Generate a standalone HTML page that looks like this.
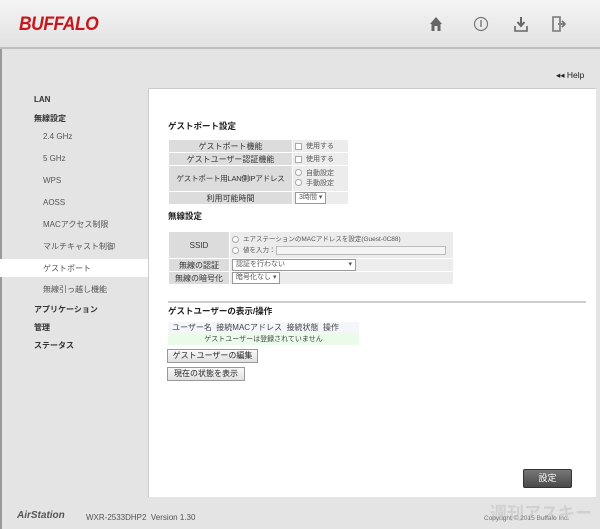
<!DOCTYPE html>
<html><head><meta charset="utf-8"><style>
*{margin:0;padding:0;box-sizing:border-box}
body{width:600px;height:529px;overflow:hidden;background:#e4e4e4;font-family:"Liberation Sans","Noto Sans CJK JP",sans-serif;font-size:9px;color:#333;position:relative}
.abs{position:absolute;white-space:nowrap}
.hdr{left:0;top:0;width:600px;height:49px;background:linear-gradient(#f4f4f4,#e2e2e2);border-bottom:2px solid #bdbdbd}
.logo{left:19px;top:14px;font:italic bold 19px "Liberation Sans",sans-serif;color:#c8161d;letter-spacing:-0.5px;transform:scaleX(0.92);transform-origin:left}
.side div{position:absolute;left:34px;font-size:8px;color:#333;white-space:nowrap}
.side .s{left:43px;color:#555}
.side b{font-weight:bold}
.panel{left:148px;top:88px;width:448px;height:409px;background:#fff;border-left:1px solid #ccc;border-top:1px solid #ccc}
.t{font-size:8.5px;color:#222;font-weight:bold}
table{border-collapse:collapse;position:absolute;font-size:8px;table-layout:fixed}
td{border:1px solid #fff;padding:0 2px;white-space:nowrap;overflow:hidden}
td.l{background:#dcdcdc;text-align:center;color:#333}
td.v{background:#ececec;color:#555;font-size:7px}
.btn{position:absolute;white-space:nowrap;background:linear-gradient(#f8f8f8,#e0e0e0);border:1px solid #999;font-size:8px;color:#222;padding:0 3px;line-height:12px;text-align:center}
.sel{display:inline-block;background:#fff;border:1px solid #999;font-size:7px;padding:0 3px;line-height:10px}
.cb{display:inline-block;width:7px;height:7px;border:1px solid #aaa;background:#fff;vertical-align:middle;margin-right:4px}
.rd{display:inline-block;width:7px;height:7px;border:1px solid #aaa;border-radius:50%;background:#fff;vertical-align:middle;margin-right:4px}
</style></head><body>
<div class="abs" style="left:0;top:0;width:2px;height:529px;background:#999"></div>
<div class="abs hdr"></div>
<div class="abs logo">BUFFALO</div>
<svg class="abs" style="left:428px;top:14px" width="170" height="20" viewBox="0 0 170 20">
<path d="M2 10 L8 3 L14 10 L12.5 10 L12.5 17 L9.5 17 L9.5 12 L6.5 12 L6.5 17 L3.5 17 L3.5 10Z" fill="#666"/>
<circle cx="53" cy="10" r="6.5" fill="none" stroke="#777" stroke-width="1.2"/><rect x="52.3" y="6" width="1.4" height="7" fill="#777"/>
<path d="M93 3v8M89.5 8l3.5 4 3.5-4" stroke="#666" stroke-width="2" fill="none"/><path d="M87 12v5h12v-5" stroke="#666" stroke-width="1.6" fill="none"/>
<path d="M132 9V3h-7v14h7v-6" stroke="#777" stroke-width="1.6" fill="none"/><path d="M130 10h6M134 7l3 3-3 3" stroke="#777" stroke-width="1.8" fill="none"/>
</svg>
<div class="abs" style="left:556px;top:70px;font-size:8.5px;color:#222">◂◂ Help</div>
<div class="abs" style="left:0;top:259px;width:148px;height:18px;background:#fff"></div>
<div class="side">
<div style="top:95px"><b>LAN</b></div>
<div style="top:113px"><b>無線設定</b></div>
<div class="s" style="top:132px">2.4 GHz</div>
<div class="s" style="top:154px">5 GHz</div>
<div class="s" style="top:176px">WPS</div>
<div class="s" style="top:198px">AOSS</div>
<div class="s" style="top:219px">MACアクセス制限</div>
<div class="s" style="top:241px">マルチキャスト制御</div>
<div class="s" style="top:263px">ゲストポート</div>
<div class="s" style="top:284px">無線引っ越し機能</div>
<div style="top:304px"><b>アプリケーション</b></div>
<div style="top:322px"><b>管理</b></div>
<div style="top:340px"><b>ステータス</b></div>
</div>
<div class="abs panel"></div>
<div class="abs t" style="left:168px;top:120px">ゲストポート設定</div>
<table style="left:168px;top:139px;width:181px">
<tr style="height:13px"><td class="l" style="width:124px">ゲストポート機能</td><td class="v"><span class="cb"></span>使用する</td></tr>
<tr style="height:13px"><td class="l">ゲストユーザー認証機能</td><td class="v"><span class="cb"></span>使用する</td></tr>
<tr style="height:26px"><td class="l" style="font-size:7.6px;letter-spacing:-0.3px">ゲストポート用LAN側IPアドレス</td><td class="v" style="line-height:10px"><span class="rd"></span>自動設定<br><span class="rd"></span>手動設定</td></tr>
<tr style="height:13px"><td class="l">利用可能時間</td><td class="v"><span class="sel">3時間 ▾</span></td></tr>
</table>
<div class="abs t" style="left:168px;top:210px">無線設定</div>
<table style="left:168px;top:231px;width:286px">
<tr style="height:27px"><td class="l" style="width:61px">SSID</td><td class="v" style="line-height:11px;font-size:6.5px"><span class="rd"></span>エアステーションのMACアドレスを設定(Guest-0C88)<br><span class="rd"></span>値を入力：<span style="display:inline-block;width:170px;height:9px;border:1px solid #bbb;background:#f4f4f4;vertical-align:middle"></span></td></tr>
<tr style="height:13px"><td class="l">無線の認証</td><td class="v"><span class="sel" style="width:124px">認証を行わない<span style="float:right">▾</span></span></td></tr>
<tr style="height:13px"><td class="l">無線の暗号化</td><td class="v"><span class="sel">暗号化なし ▾</span></td></tr>
</table>
<div class="abs" style="left:168px;top:301px;width:418px;height:2px;background:#ccc"></div>
<div class="abs t" style="left:168px;top:305px">ゲストユーザーの表示/操作</div>
<div class="abs" style="left:168px;top:322px;width:191px;height:12px;background:#f4f6fa;font-size:8px;color:#444;padding-left:4px">ユーザー名&nbsp; 接続MACアドレス&nbsp; 接続状態&nbsp; 操作</div>
<div class="abs" style="left:168px;top:334px;width:191px;height:11px;background:#eafbe9;font-size:7px;color:#444;text-align:center">ゲストユーザーは登録されていません</div>
<div class="btn" style="left:167px;top:349px;width:91px;height:14px">ゲストユーザーの編集</div>
<div class="btn" style="left:167px;top:367px;width:78px;height:14px">現在の状態を表示</div>
<div class="abs" style="left:523px;top:469px;width:49px;height:19px;background:linear-gradient(#777,#4a4a4a);border:1px solid #333;border-radius:2px;color:#fff;font-size:9px;text-align:center;line-height:17px">設定</div>
<div class="abs" style="left:17px;top:510px;font:italic bold 10px 'Liberation Sans',sans-serif;color:#555">AirStation</div>
<div class="abs" style="left:86px;top:513px;font-size:8px;color:#555">WXR-2533DHP2&nbsp; Version 1.30</div>
<div class="abs" style="left:490px;top:499px;font-size:17px;color:#d0d0d0;font-weight:bold">週刊アスキー</div>
<div class="abs" style="left:484px;top:515px;font-size:6.5px;color:#777">Copyright © 2015 Buffalo Inc.</div>
</body></html>
